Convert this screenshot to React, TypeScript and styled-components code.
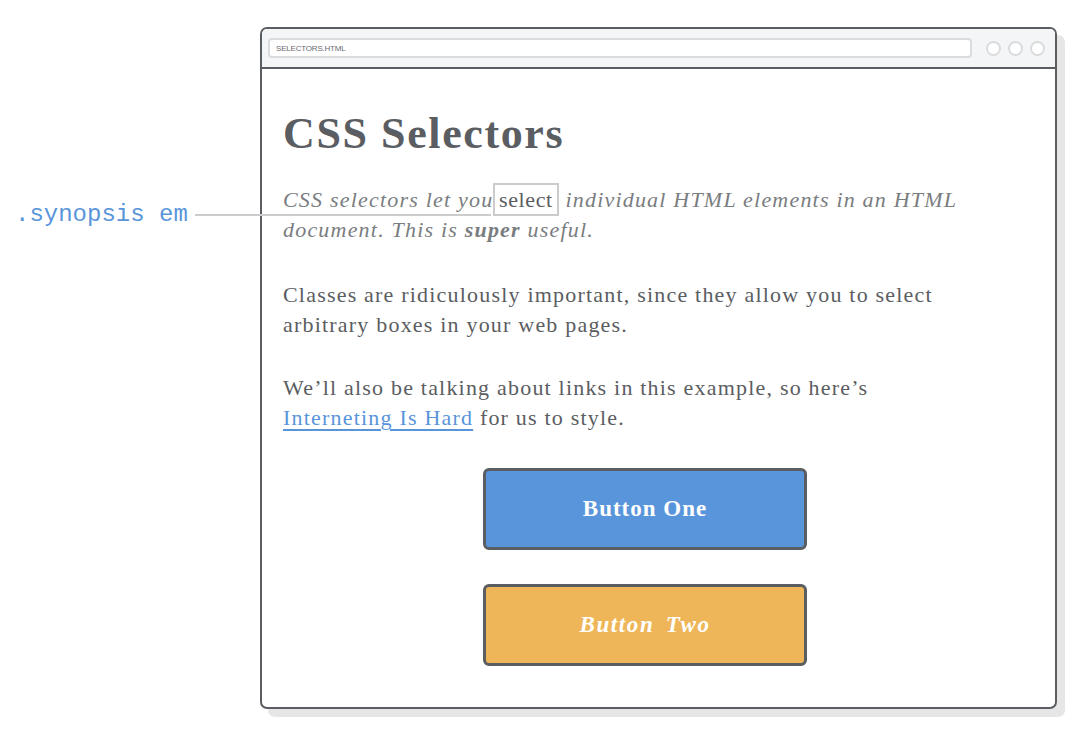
import React from 'react';
import styled, { createGlobalStyle } from 'styled-components';

const GlobalStyle = createGlobalStyle`
    body {
        margin: 0;
        background: #ffffff;
    }
`;

const StyledPage = styled.div`
    position: relative;
    width: 1086px;
    height: 736px;
    padding: 27px 0 0 260px;
    box-sizing: border-box;
    font-family: 'Liberation Serif', 'Times New Roman', serif;
`;

const StyledWindow = styled.div`
    width: 797px;
    height: 682px;
    box-sizing: border-box;
    border: 2px solid #5a5d61;
    border-radius: 7px;
    background: #ffffff;
    box-shadow: 8px 8px 0 #e6e6e6;
    display: flex;
    flex-direction: column;
    overflow: hidden;
`;

const StyledToolbar = styled.div`
    display: flex;
    align-items: center;
    gap: 14px;
    height: 40px;
    padding: 0 10px 0 6px;
    box-sizing: border-box;
    background: #f4f5f6;
    border-bottom: 2px solid #5a5d61;
`;

const StyledAddress = styled.div`
    flex: 1;
    height: 20px;
    box-sizing: border-box;
    border: 2px solid #d9dbdd;
    border-radius: 4px;
    background: #ffffff;
    display: flex;
    align-items: center;
    padding-left: 6px;
    font-family: 'Liberation Sans', Arial, sans-serif;
    font-size: 8px;
    color: #6a6d70;
    letter-spacing: -0.2px;
`;

const StyledDots = styled.div`
    display: flex;
    gap: 7px;
`;

const StyledDot = styled.span`
    width: 15px;
    height: 15px;
    box-sizing: border-box;
    border: 2px solid #d9dbdd;
    border-radius: 50%;
    background: #ffffff;
`;

const StyledContent = styled.div`
    flex: 1;
    padding: 40px 80px 0 21px;
    color: #5a5d61;
`;

const StyledTitle = styled.h1`
    margin: 0 0 26px;
    font-size: 44px;
    line-height: 50px;
    font-weight: bold;
    letter-spacing: 1.6px;
`;

const StyledParagraph = styled.p`
    margin: 0 0 33px;
    font-size: 22px;
    line-height: 30px;
    letter-spacing: 1.2px;
`;

const StyledSynopsis = styled(StyledParagraph)`
    font-style: italic;
    color: #7a7d80;
    margin-bottom: 35px;
`;

const StyledHighlight = styled.em`
    font-style: normal;
    color: #5a5d61;
    border: 2px solid #cccccc;
    padding: 2px 4px 2px 4px;
    margin-left: -7px;
    letter-spacing: 0.6px;
`;

const StyledLink = styled.a`
    color: #5995da;
    text-decoration: underline;
    text-underline-offset: 4px;
`;

const StyledButtons = styled.div`
    display: flex;
    flex-direction: column;
    gap: 34px;
    padding: 2px 0 0 200px;
`;

const StyledButton = styled.div<{ tone: string; slanted?: boolean }>`
    width: 324px;
    height: 82px;
    box-sizing: border-box;
    border: 3px solid #5a5d61;
    border-radius: 6px;
    background: ${({ tone }) => tone};
    display: flex;
    align-items: center;
    justify-content: center;
    color: #ffffff;
    font-size: 23px;
    font-weight: bold;
    font-style: ${({ slanted }) => (slanted ? 'italic' : 'normal')};
    letter-spacing: ${({ slanted }) => (slanted ? '1.6px' : '1px')};
    word-spacing: ${({ slanted }) => (slanted ? '4px' : '0')};
`;

const StyledCallout = styled.div`
    position: absolute;
    left: 15px;
    top: 200px;
    display: flex;
    align-items: center;
    gap: 7px;
`;

const StyledSelector = styled.span`
    font-family: 'Liberation Mono', 'Courier New', monospace;
    font-size: 24px;
    line-height: 30px;
    color: #5995da;
`;

const StyledLeader = styled.span`
    width: 296px;
    height: 2px;
    background: #cccccc;
`;

export default function App() {
    return (
        <>
            <GlobalStyle />
            <StyledPage>
                <StyledWindow>
                    <StyledToolbar>
                        <StyledAddress>SELECTORS.HTML</StyledAddress>
                        <StyledDots>
                            <StyledDot />
                            <StyledDot />
                            <StyledDot />
                        </StyledDots>
                    </StyledToolbar>
                    <StyledContent>
                        <StyledTitle>CSS Selectors</StyledTitle>
                        <StyledSynopsis>
                            CSS selectors let you <StyledHighlight>select</StyledHighlight> individual HTML elements in an
                            HTML document. This is <strong>super</strong> useful.
                        </StyledSynopsis>
                        <StyledParagraph>
                            Classes are ridiculously important, since they allow you to select arbitrary boxes in your web
                            pages.
                        </StyledParagraph>
                        <StyledParagraph>
                            We’ll also be talking about links in this example, so here’s{' '}
                            <StyledLink href="#">Interneting Is Hard</StyledLink> for us to style.
                        </StyledParagraph>
                        <StyledButtons>
                            <StyledButton tone="#5995da">Button One</StyledButton>
                            <StyledButton tone="#eeb658" slanted>
                                Button Two
                            </StyledButton>
                        </StyledButtons>
                    </StyledContent>
                </StyledWindow>
                <StyledCallout>
                    <StyledSelector>.synopsis em</StyledSelector>
                    <StyledLeader />
                </StyledCallout>
            </StyledPage>
        </>
    );
}
